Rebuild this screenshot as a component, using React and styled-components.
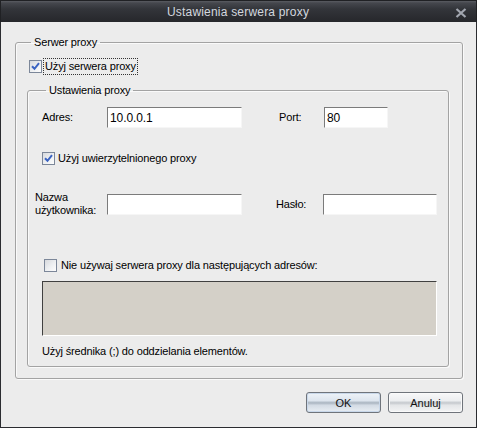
import React from 'react'
import styled, { createGlobalStyle } from 'styled-components'

const GlobalStyle = createGlobalStyle`
  html, body {
    margin: 0;
    padding: 0;
    background: #ececec;
  }

  body {
    font-family: "Liberation Sans", Arial, sans-serif;
    font-size: 11px;
    letter-spacing: -0.15px;
    color: #000;
  }
`

const Window = styled.div`
  width: 477px;
  height: 428px;
  display: flex;
  flex-direction: column;
  box-sizing: border-box;
`

const TitleBar = styled.div`
  height: 22px;
  flex: none;
  display: grid;
  grid-template-columns: 1fr auto 1fr;
  align-items: center;
  padding: 0 9px 0 8px;
  background: linear-gradient(#5a5c62 0, #45474d 2px, #33353a 8px, #26272b 100%);
  border: 1px solid #202124;
  border-bottom: none;
  box-sizing: border-box;
`

const Title = styled.div`
  grid-column: 2;
  font-size: 12px;
  color: #d3d7df;
  letter-spacing: 0.2px;
`

const CloseButton = styled.div`
  grid-column: 3;
  justify-self: end;
  display: flex;
  width: 12px;
  height: 10px;
  margin-top: 2px;
`

const Body = styled.div`
  flex: 1;
  display: flex;
  flex-direction: column;
  padding: 14px 13px 0 14px;
  background: #ececec;
  border: 1px solid #2b2c30;
  border-top: none;
  box-sizing: border-box;
`

const Group = styled.fieldset`
  margin: ${p => p.$top || 0}px 0 0 0;
  padding: ${p => p.$pad};
  border: 1px solid #a3a3a3;
  border-radius: 3px;
  box-shadow: inset 1px 1px 0 #fafafa, 1px 1px 0 #fafafa;
  min-width: 0;
`

const Legend = styled.legend`
  margin-left: 4px;
  padding: 0 3px;
  line-height: 13px;
  font-size: 11px;
`

const CheckRow = styled.label`
  display: flex;
  align-items: center;
  gap: ${p => p.$gap || 3}px;
  margin: ${p => p.$top || 0}px 0 0 ${p => p.$left || 0}px;
  height: ${p => p.$height || 13}px;
  line-height: 13px;
`

const Box = styled.span`
  width: 13px;
  height: 13px;
  flex: none;
  box-sizing: border-box;
  border: 1px solid #7c8799;
  background: linear-gradient(135deg, #d7d9dd 0%, #eef0f2 55%, #fdfdfd 100%);
  display: flex;
  align-items: center;
  justify-content: center;
`

const CheckText = styled.span`
  padding: 1px 1px;
  outline: ${p => (p.$focus ? '1px dotted #333' : 'none')};
  outline-offset: 0;
`

const FieldRow = styled.div`
  display: flex;
  align-items: center;
  margin: ${p => p.$top || 0}px 0 0 ${p => p.$left || 0}px;
  min-height: 21px;
`

const Label = styled.span`
  width: ${p => p.$width}px;
  flex: none;
  margin-left: ${p => p.$gap || 0}px;
  line-height: 13px;
`

const TextInput = styled.input`
  width: ${p => p.$width}px;
  height: 21px;
  flex: none;
  box-sizing: border-box;
  margin: 0;
  padding: 0 2px;
  border: 1px solid;
  border-color: #7b7b7b #f6f6f6 #f6f6f6 #7b7b7b;
  background: #fff;
  font-family: "Liberation Sans", Arial, sans-serif;
  font-size: 12px;
  letter-spacing: -0.1px;
  color: #000;
  outline: none;
`

const ListArea = styled.div`
  margin-top: 9px;
  width: 395px;
  height: 55px;
  box-sizing: border-box;
  background: #d4d0c8;
  border: 1px solid;
  border-color: #404040 #ffffff #ffffff #404040;
`

const Hint = styled.div`
  margin-top: 9px;
  line-height: 13px;
`

const ButtonBar = styled.div`
  display: flex;
  justify-content: flex-end;
  gap: 7px;
  margin-top: 13px;
`

const Button = styled.button`
  width: 75px;
  height: 21px;
  padding: 0;
  box-sizing: border-box;
  border: 1px solid #6f747b;
  border-radius: 3px;
  font-family: "Liberation Sans", Arial, sans-serif;
  font-size: 11px;
  color: #111;
  background: ${p =>
    p.$default
      ? 'linear-gradient(#eef3f8 0%, #dde5ee 40%, #a9b4c0 52%, #d3dbe4 64%, #e8eef4 100%)'
      : 'linear-gradient(#f8f8f9 0%, #eceef0 40%, #c4c8cd 52%, #e4e6e8 64%, #f3f4f5 100%)'};
  box-shadow: inset 0 0 0 1px ${p => (p.$default ? '#c9d8ea' : '#fafafa')};
`

function Check ({ checked }) {
  return (
    <Box>
      {checked && (
        <svg width="9" height="9" viewBox="0 0 9 9">
          <path d="M1 4.2 L3.5 6.8 L8 1.2" fill="none" stroke="#3a63c2" strokeWidth="2" />
        </svg>
      )}
    </Box>
  )
}

export default function App () {
  return (
    <>
      <GlobalStyle />
      <Window>
        <TitleBar>
          <Title>Ustawienia serwera proxy</Title>
          <CloseButton>
            <svg width="12" height="10" viewBox="0 0 12 10">
              <path d="M1.5 1 L10.5 9 M10.5 1 L1.5 9" stroke="#a3a7b0" strokeWidth="2.2" />
            </svg>
          </CloseButton>
        </TitleBar>
        <Body>
          <Group $pad="9px 13px 11px 11px">
            <Legend>Serwer proxy</Legend>
            <CheckRow $left={2} $height={16} $gap={2}>
              <Check checked />
              <CheckText $focus>Użyj serwera proxy</CheckText>
            </CheckRow>

            <Group $top={10} $pad="10px 0 8px 14px">
              <Legend>Ustawienia proxy</Legend>
              <FieldRow>
                <Label $width={65}>Adres:</Label>
                <TextInput $width={135} value="10.0.0.1" readOnly />
                <Label $gap={37} $width={45}>Port:</Label>
                <TextInput $width={64} value="80" readOnly />
              </FieldRow>

              <CheckRow $top={24}>
                <Check checked />
                <span>Użyj uwierzytelnionego proxy</span>
              </CheckRow>

              <FieldRow $top={26} $left={-7}>
                <Label $width={72}>Nazwa<br />użytkownika:</Label>
                <TextInput $width={135} value="" readOnly />
                <Label $gap={34} $width={47}>Hasło:</Label>
                <TextInput $width={114} type="password" value="" readOnly />
              </FieldRow>

              <CheckRow $top={42} $left={2} $gap={4}>
                <Check />
                <span>Nie używaj serwera proxy dla następujących adresów:</span>
              </CheckRow>

              <ListArea />
              <Hint>Użyj średnika (;) do oddzielania elementów.</Hint>
            </Group>
          </Group>

          <ButtonBar>
            <Button $default>OK</Button>
            <Button>Anuluj</Button>
          </ButtonBar>
        </Body>
      </Window>
    </>
  )
}
